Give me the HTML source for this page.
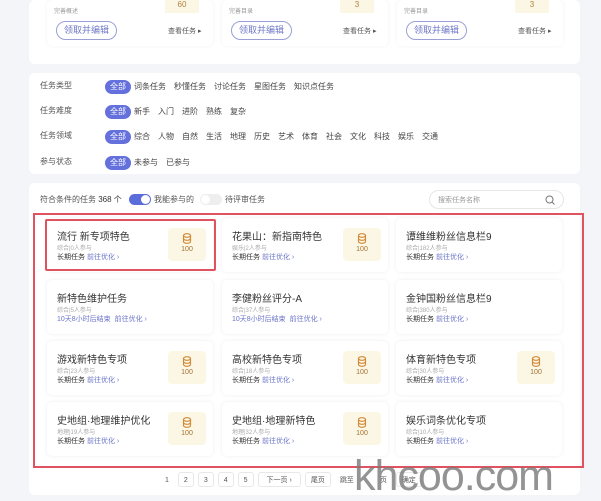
<!DOCTYPE html><html><head><meta charset="utf-8"><style>
*{margin:0;padding:0;box-sizing:border-box}
body{width:601px;height:500px;overflow:hidden;background:#f4f5f9;font-family:"Liberation Sans","Noto Sans CJK SC",sans-serif;position:relative;color:#333}
.a{position:absolute}
.panel{position:absolute;background:#fff;border-radius:6px}
.tc{position:absolute;background:#fff;border-radius:5px;box-shadow:0 0 4px rgba(0,0,0,.06)}
.btn{position:absolute;left:9px;top:21px;width:61px;height:19px;border:1px solid #9a9fd6;border-radius:10px;font-size:9px;color:#7078c8;text-align:center;line-height:17px}
.lbl{font-size:8px;color:#555}
.pill{display:inline-block;background:#6470dc;color:#fff;border-radius:8px;padding:0 5px;height:14px;line-height:14px;font-size:8px;margin-right:3px}
.opt{display:inline-block;font-size:8px;color:#444;margin-right:8px}
.row{position:absolute;left:105px;height:14px;line-height:14px}
.card{position:absolute;width:166px;height:54px;background:#fff;border-radius:5px;box-shadow:0 0 4px rgba(0,0,0,.07)}
.card .t{position:absolute;left:10px;top:10px;font-size:10px;color:#333}
.card .m{position:absolute;left:10px;top:25px;font-size:6px;color:#aaa}
.card .b{position:absolute;left:10px;top:34px;font-size:7px;color:#333}
.card .b span{color:#6b74c8}
.coin{position:absolute;right:7px;top:10px;width:38px;height:33px;background:#fcf7e5;border-radius:4px;text-align:center;font-size:7px;color:#a07030}
.pg{display:inline-block;height:15px;line-height:15px;border:1px solid #e8e8e8;border-radius:3px;font-size:7px;color:#555;padding:0 5px;margin-right:4px;background:#fff}
</style></head><body>
<div class="panel" style="left:29px;top:0;width:551px;height:64px"></div>
<div class="tc" style="left:47px;top:0;width:166px;height:46px"><div class="a lbl" style="left:7px;top:6px;font-size:6px;color:#999">完善概述</div><div class="btn">领取并编辑</div><div class="a lbl" style="left:121px;top:26px;font-size:7px">查看任务 ▸</div><div class="a" style="left:118px;top:0;width:34px;height:13px;background:#fcf7e5;font-size:8px;color:#b08040;text-align:center">60</div></div>
<div class="tc" style="left:222px;top:0;width:166px;height:46px"><div class="a lbl" style="left:7px;top:6px;font-size:6px;color:#999">完善目录</div><div class="btn">领取并编辑</div><div class="a lbl" style="left:121px;top:26px;font-size:7px">查看任务 ▸</div><div class="a" style="left:118px;top:0;width:34px;height:13px;background:#fcf7e5;font-size:8px;color:#b08040;text-align:center">3</div></div>
<div class="tc" style="left:397px;top:0;width:166px;height:46px"><div class="a lbl" style="left:7px;top:6px;font-size:6px;color:#999">完善目录</div><div class="btn">领取并编辑</div><div class="a lbl" style="left:121px;top:26px;font-size:7px">查看任务 ▸</div><div class="a" style="left:118px;top:0;width:34px;height:13px;background:#fcf7e5;font-size:8px;color:#b08040;text-align:center">3</div></div>

<div class="panel" style="left:29px;top:73px;width:551px;height:101px"></div>
<div class="a lbl" style="left:40px;top:80px">任务类型</div>
<div class="a lbl" style="left:40px;top:105px">任务难度</div>
<div class="a lbl" style="left:40px;top:130px">任务领域</div>
<div class="a lbl" style="left:40px;top:156px">参与状态</div>
<div class="row" style="top:78px"><span class="pill">全部</span><span class="opt">词条任务</span><span class="opt">秒懂任务</span><span class="opt">讨论任务</span><span class="opt">星图任务</span><span class="opt">知识点任务</span></div>
<div class="row" style="top:103px"><span class="pill">全部</span><span class="opt">新手</span><span class="opt">入门</span><span class="opt">进阶</span><span class="opt">熟练</span><span class="opt">复杂</span></div>
<div class="row" style="top:128px"><span class="pill">全部</span><span class="opt">综合</span><span class="opt">人物</span><span class="opt">自然</span><span class="opt">生活</span><span class="opt">地理</span><span class="opt">历史</span><span class="opt">艺术</span><span class="opt">体育</span><span class="opt">社会</span><span class="opt">文化</span><span class="opt">科技</span><span class="opt">娱乐</span><span class="opt">交通</span></div>
<div class="row" style="top:154px"><span class="pill">全部</span><span class="opt">未参与</span><span class="opt">已参与</span></div>

<div class="panel" style="left:29px;top:183px;width:551px;height:312px"></div>
<div class="a lbl" style="left:40px;top:194px">符合条件的任务 <b style="color:#333;font-weight:normal">368 个</b></div>
<div class="a" style="left:129px;top:194px;width:22px;height:11px;border-radius:6px;background:#5b6cdb"><div class="a" style="right:1px;top:1px;width:9px;height:9px;border-radius:50%;background:#fff"></div></div>
<div class="a lbl" style="left:154px;top:194px">我能参与的</div>
<div class="a" style="left:200px;top:194px;width:22px;height:11px;border-radius:6px;background:#eee"><div class="a" style="left:1px;top:1px;width:9px;height:9px;border-radius:50%;background:#fff"></div></div>
<div class="a lbl" style="left:225px;top:194px">待评审任务</div>
<div class="a" style="left:429px;top:190px;width:135px;height:19px;border:1px solid #e6e6e6;border-radius:10px"><span class="a" style="left:8px;top:4px;font-size:7px;color:#999">搜索任务名称</span><svg class="a" style="right:8px;top:4px" width="10" height="10" viewBox="0 0 10 10"><circle cx="4.5" cy="4.5" r="3.5" fill="none" stroke="#777" stroke-width="1"/><path d="M7 7l2.5 2.5" stroke="#777"/></svg></div>

<div id="cards"></div>
<div class="a" style="left:33px;top:213px;width:551px;height:255px;border:2px solid #e05260"></div>
<div class="a" style="left:45px;top:219px;width:171px;height:52px;border:2.5px solid #e05260;border-radius:2px"></div>

<div class="a" style="left:160px;top:469px;white-space:nowrap"><span class="pg" style="border:none">1</span><span class="pg">2</span><span class="pg">3</span><span class="pg">4</span><span class="pg">5</span><span class="pg" style="padding:0 8px">下一页 ›</span><span class="pg">尾页</span><span class="pg" style="border:none">跳至</span><span class="pg" style="border:none;margin-left:12px">页</span><span class="pg">确定</span></div>
<div class="a" style="left:354px;top:452px;font-size:43px;color:rgba(120,120,120,.8);font-family:'Liberation Sans',sans-serif;letter-spacing:-1px">khcoo.com</div>

<script>
var d=[["流行 新专项特色","综合|0人参与",0,1],["花果山：新指南特色","娱乐|2人参与",0,1],["谭维维粉丝信息栏9","综合|182人参与",0,0],
["新特色维护任务","综合|5人参与",1,0],["李健粉丝评分-A","综合|37人参与",1,0],["金钟国粉丝信息栏9","综合|380人参与",0,0],
["游戏新特色专项","综合|23人参与",0,1],["高校新特色专项","综合|18人参与",0,1],["体育新特色专项","综合|30人参与",0,1],
["史地组·地理维护优化","地理|19人参与",0,1],["史地组·地理新特色","地理|32人参与",0,1],["娱乐词条优化专项","综合|10人参与",0,0]];
var xs=[47,222,396],ys=[218,280,341,402],h="";
d.forEach(function(c,i){var x=xs[i%3],y=ys[Math.floor(i/3)];
h+='<div class="card" style="left:'+x+'px;top:'+y+'px"><div class="t">'+c[0]+'</div><div class="m">'+c[1]+'</div><div class="b">'+(c[2]?'<span>10天8小时后结束</span>&nbsp; ':'长期任务 ')+'<span>前往优化 ›</span></div>'+(c[3]?'<div class="coin"><svg width="10" height="11" viewBox="0 0 10 11" style="margin-top:5px"><ellipse cx="5" cy="2.5" rx="3.5" ry="1.8" fill="none" stroke="#d08a3a" stroke-width="1.2"/><path d="M1.5 2.5v6c0 1 1.6 1.8 3.5 1.8s3.5-.8 3.5-1.8v-6M1.5 5.5c0 1 1.6 1.8 3.5 1.8s3.5-.8 3.5-1.8" fill="none" stroke="#d08a3a" stroke-width="1.2"/></svg><div>100</div></div>':'')+'</div>';});
document.getElementById("cards").innerHTML=h;
</script>
</body></html>
